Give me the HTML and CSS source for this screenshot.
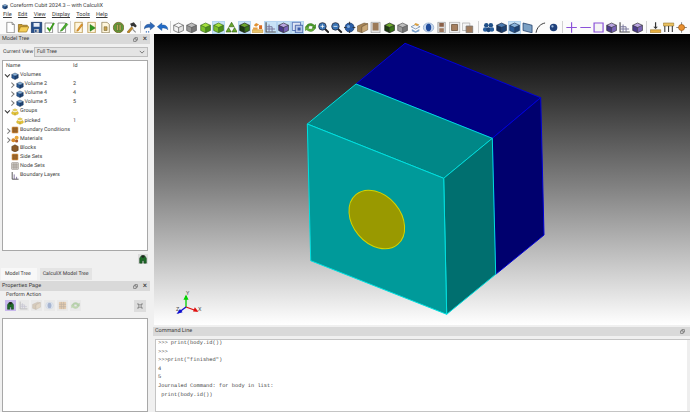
FILE: index.html
```html
<!DOCTYPE html>
<html lang="en">
<head>
<meta charset="utf-8">
<title>Coreform Cubit 2024.3 -- with CalculiX</title>
<link rel="stylesheet" href="styles.css">
</head>
<body>
<svg class="defs" aria-hidden="true">
  <symbol id="page" viewBox="0 0 16 16"><path d="M3 1h7l3 3v11H3z" fill="#fff" stroke="#777"/><path d="M10 1v3h3" fill="#ddd" stroke="#777"/></symbol>
  <symbol id="open" viewBox="0 0 16 16"><path d="M1 4h5l1 1h6v2H4L1 14z" fill="#c99a2c" stroke="#8a6a1e"/><path d="M4 7h11l-3 7H1z" fill="#f5cf5a" stroke="#a07c22"/></symbol>
  <symbol id="save" viewBox="0 0 16 16"><path d="M1 1h14v14H1z" fill="#27508c" stroke="#1b3766"/><path d="M4 2h8v5H4z" fill="#e8eef6"/><path d="M5 10h6v5H5z" fill="#c8c8c8"/><path d="M6 11h2v3H6z" fill="#27508c"/></symbol>
  <symbol id="check" viewBox="0 0 16 16"><path d="M2 2h10v13H2z" fill="#fff" stroke="#777"/><path d="M5 8l3 4 6-10" fill="none" stroke="#3c9a1c" stroke-width="2.4"/></symbol>
  <symbol id="pen" viewBox="0 0 16 16"><path d="M2 2h10v13H2z" fill="#fff" stroke="#777"/><path d="M6 11l7-9 2 2-7 8-3 1z" fill="#49b02c" stroke="#2c7a14" stroke-width=".7"/></symbol>
  <symbol id="journal" viewBox="0 0 16 16"><path d="M3 1h10v14H3z" fill="#fff6dc" stroke="#b08a3a"/><path d="M6 11l6-8 1.500 1.500-6 8-2 .5z" fill="#e69a28" stroke="#a8661a" stroke-width=".6"/></symbol>
  <symbol id="play" viewBox="0 0 16 16"><path d="M3 1h10v14H3z" fill="#fff6dc" stroke="#b08a3a"/><path d="M6 4l7 4.500-7 4.500z" fill="#2f9a1e" stroke="#1d6a10" stroke-width=".6"/></symbol>
  <symbol id="dots" viewBox="0 0 16 16"><path d="M3 1h7l3 3v11H3z" fill="#fff6dc" stroke="#8a7a50"/><path d="M6 7h4v5H6z" fill="#c9a34a" stroke="#6a5a30" stroke-width=".7"/></symbol>
  <symbol id="pause" viewBox="0 0 16 16"><circle cx="8" cy="8" r="7" fill="#5e9a3a" stroke="#7a5a1e"/><path d="M5.500 4h2v8h-2zM9 4h2v8H9z" fill="#d8c070" stroke="#4a3a10" stroke-width=".5"/></symbol>
  <symbol id="hammer" viewBox="0 0 16 16"><path d="M2 14l6-7 2 2-6 7z" fill="#c08a2a" stroke="#6a4a10" stroke-width=".6"/><path d="M6 3l5-2 4 5-2 2-3-2-2 1z" fill="#333"/><path d="M10 10l4 4-1 1-4-4z" fill="#888"/></symbol>
  <symbol id="redo" viewBox="0 0 16 16"><path d="M1 10c0-5 4-7 8-6V1l6 5-6 5V8c-3-1-6 0-8 2z" fill="#2a66b8" stroke="#174280" stroke-width=".6"/><path d="M3 13h1.500v1.500H3zM6 13h1.500v1.500H6z" fill="#2a66b8"/></symbol>
  <symbol id="undo" viewBox="0 0 16 16"><path d="M15 11c0-5-4-7-8-6V2L1 7l6 5V9c3-1 6 0 8 2z" fill="#1f6ac8" stroke="#154a90" stroke-width=".6"/></symbol>
  <symbol id="cube" viewBox="0 0 16 16"><path d="M1.500 5L8 2l6.500 3L8 8z" style="fill:var(--t)"/><path d="M1.500 5L8 8v7l-6.500-3z" style="fill:var(--l)"/><path d="M14.500 5L8 8v7l6.500-3z" style="fill:var(--r)"/><path d="M1.500 5L8 2l6.500 3v7L8 15l-6.500-3zM1.500 5L8 8l6.500-3M8 8v7" fill="none" style="stroke:var(--e)" stroke-width=".8"/></symbol>
  <symbol id="tri" viewBox="0 0 16 16"><path d="M8 1l3.500 6h-7zM4 8l3.500 6H.5zM12 8l3.500 6h-7z" fill="#69a82c" stroke="#2f5a10" stroke-width=".8"/></symbol>
  <symbol id="orange" viewBox="0 0 16 16"><path d="M6 2l4 2-4 3-3-2z" fill="#e09030"/><path d="M1 11h14v4H1z" fill="#e8c46a" stroke="#b07a20" stroke-width=".6"/><path d="M10 5h4v5h-4z" fill="#d86a20"/><path d="M2 8h6v3H2z" fill="#e8a040"/></symbol>
  <symbol id="grid" viewBox="0 0 16 16"><path d="M2 1v13h13" fill="none" stroke="#555" stroke-width="1.600"/><path d="M6 4v10M10 7v7M2 7h8M2 10h12" stroke="#77759a" stroke-width="1.300"/></symbol>
  <symbol id="refresh" viewBox="0 0 16 16"><path d="M2 7c1-4 7-6 11-2l2-1v5h-5l1.500-2C9 5 5 5 4 8z" fill="#4e9e2c" stroke="#2a6a14" stroke-width=".6"/><path d="M14 9c-1 4-7 6-11 2l-2 1V7h5l-1.500 2C7 11 11 11 12 8z" fill="#6ab43a" stroke="#2a6a14" stroke-width=".6"/></symbol>
  <symbol id="zoomin" viewBox="0 0 16 16"><path d="M10 10l5 5" stroke="#222" stroke-width="2.500"/><circle cx="6.500" cy="6.500" r="5" fill="#3a74b4" stroke="#223"/><path d="M4 6.500h5M6.500 4v5" stroke="#fff"/></symbol>
  <symbol id="zoomout" viewBox="0 0 16 16"><path d="M10 10l5 5" stroke="#222" stroke-width="2.500"/><circle cx="6.500" cy="6.500" r="5" fill="#3a74b4" stroke="#223"/><path d="M4 6.500h5" stroke="#fff"/></symbol>
  <symbol id="globe" viewBox="0 0 16 16"><circle cx="8" cy="8" r="6" fill="#2a5ea8" stroke="#16386e"/><path d="M8 0v4M8 12v4M0 8h4M12 8h4" stroke="#333" stroke-width="1.200"/><circle cx="6.500" cy="6.500" r="2" fill="#7aa8dc"/></symbol>
  <symbol id="box" viewBox="0 0 16 16"><path d="M1 6l9-4 5 1-8 4v8l-6-2z" fill="#a68558" stroke="#5a4020" stroke-width=".6"/><path d="M7 7l8-4v8l-8 4z" fill="#c9a878" stroke="#5a4020" stroke-width=".6"/></symbol>
  <symbol id="frame" viewBox="0 0 16 16"><path d="M2 1h12v14H2z" fill="#e4e4e4" stroke="#999"/><path d="M4 2h8v10H4z" fill="#9c7a58"/></symbol>
  <symbol id="layers" viewBox="0 0 16 16"><path d="M2 7l6-3 6 3-6 3z" fill="#f4f4f4" stroke="#6a8ab0"/><path d="M8 2l5 2-3 2-4-2z" fill="#dca040"/><path d="M3 10l5 3 5-3v3l-5 2-5-2z" fill="#7aa0cc"/></symbol>
  <symbol id="eye" viewBox="0 0 16 16"><ellipse cx="8" cy="8" rx="7" ry="6" fill="#c8d8ee" stroke="#8aa4c8"/><ellipse cx="8" cy="8" rx="3.500" ry="5" fill="#1e4a9a"/></symbol>
  <symbol id="door" viewBox="0 0 16 16"><path d="M3 1h10v14H3z" fill="#ddd" stroke="#999"/><path d="M5 2h6v5H5z" fill="#8a6048"/><path d="M5 9h6v5H5z" fill="#a07a60"/></symbol>
  <symbol id="brownbox" viewBox="0 0 16 16"><path d="M1 1h14v14H1z" fill="#eee" stroke="#aaa"/><path d="M4 4h8v8H4z" fill="#a68060" stroke="#6a5038"/></symbol>
  <symbol id="overlap" viewBox="0 0 16 16"><path d="M1 2h10v10H1z" fill="#f4f4f4" stroke="#aaa"/><path d="M6 6h9v9H6z" fill="#a07a5a" stroke="#777"/></symbol>
  <symbol id="overlapb" viewBox="0 0 16 16"><path d="M1 1h11v11H1z" fill="#dfe6f4" stroke="#3a5aa8"/><path d="M5 5h10v10H5z" fill="#b8c8e8" stroke="#2a4a98"/><path d="M8 8h4v4H8z" fill="#3a5aa8"/></symbol>
  <symbol id="cluster" viewBox="0 0 16 16"><circle cx="5" cy="5" r="3" fill="#1f4f88"/><circle cx="11" cy="5" r="3" fill="#1f4f88"/><circle cx="3.500" cy="10.500" r="3" fill="#2a5f9e"/><circle cx="8" cy="11" r="3.200" fill="#1b4478"/><circle cx="12.500" cy="10.500" r="3" fill="#2a5f9e"/></symbol>
  <symbol id="face" viewBox="0 0 16 16"><path d="M2 2l12 3v10L2 12z" fill="#7aa0c4" stroke="#1c3a66"/></symbol>
  <symbol id="curve" viewBox="0 0 16 16"><path d="M2 15C3 8 8 3 14 2" fill="none" stroke="#333" stroke-width="1.300"/></symbol>
  <symbol id="ball" viewBox="0 0 16 16"><circle cx="8" cy="8" r="5" fill="#1d3f7a"/><circle cx="6.500" cy="6.500" r="1.500" fill="#9ab8dc"/></symbol>
  <symbol id="plus" viewBox="0 0 16 16"><path d="M8 1v14M1 8h14" stroke="#8a50d8" stroke-width="1.600"/></symbol>
  <symbol id="minus" viewBox="0 0 16 16"><path d="M1 8h14" stroke="#8a50d8" stroke-width="1.600"/></symbol>
  <symbol id="square" viewBox="0 0 16 16"><path d="M2 2h12v12H2z" fill="#f4f4f4" stroke="#8a50d8" stroke-width="1.600"/></symbol>
  <symbol id="anvil" viewBox="0 0 16 16"><path d="M8 1v8" stroke="#333" stroke-width="1.600"/><path d="M1 11h14v4H1z" fill="#e8b040" stroke="#8a6a20" stroke-width=".7"/><path d="M5 7l3 3 3-3z" fill="#333"/></symbol>
  <symbol id="bracket" viewBox="0 0 16 16"><path d="M1 2h14v4H1z" fill="#e8c060" stroke="#8a6a20" stroke-width=".7"/><path d="M3 6v8M8 6v8M13 6v8" stroke="#333" stroke-width="1.400"/></symbol>
  <symbol id="gear" viewBox="0 0 16 16"><path d="M8 1v14M1 8h14" stroke="#777" stroke-width="1.200"/><circle cx="8" cy="8" r="4" fill="#e89030" stroke="#a05a10"/></symbol>
  <symbol id="float" viewBox="0 0 8 8"><path d="M3 1h4v4H3z" fill="#e8e8e8" stroke="#333" stroke-width=".8"/><path d="M1 3h4v4H1z" fill="#e8e8e8" stroke="#333" stroke-width=".8"/></symbol>
  <symbol id="group" viewBox="0 0 10 10"><path d="M5 1l3 1.500-3 1.500-3-1.500z" fill="#f4dc60" stroke="#b89a20" stroke-width=".5"/><path d="M2 4.500l3 1.500v3L1 7.500V5zM8 4.500L5 6v3l4-1.500V5z" fill="#e8c83a" stroke="#b89a20" stroke-width=".5"/></symbol>
  <symbol id="bc" viewBox="0 0 10 10"><path d="M1 1h8v8H1z" fill="#d08a3a"/><path d="M3.700 1v8M6.300 1v8M1 3.700h8M1 6.300h8" stroke="#5a3a18" stroke-width=".7"/></symbol>
  <symbol id="mat" viewBox="0 0 10 10"><circle cx="3" cy="6.500" r="2.500" fill="#d88a2a"/><circle cx="7" cy="3.500" r="2.500" fill="#e8a83a"/><circle cx="7" cy="7.500" r="2" fill="#a85a2a"/></symbol>
  <symbol id="block" viewBox="0 0 10 10"><path d="M1 3l4-2 4 2v5l-4 2-4-2z" fill="#8a5a28" stroke="#4a2e10" stroke-width=".6"/></symbol>
  <symbol id="nodes" viewBox="0 0 10 10"><path d="M1 1h8v8H1zM3.700 1v8M6.300 1v8M1 3.700h8M1 6.300h8" fill="none" stroke="#4a3a2a" stroke-width=".6"/></symbol>
  <symbol id="layersb" viewBox="0 0 10 10"><path d="M1.500 0v9h8" fill="none" stroke="#333" stroke-width="1"/><path d="M4 3v6M7 6v3" stroke="#6a5a8a" stroke-width="1"/></symbol>
  <symbol id="person" viewBox="0 0 12 12"><path d="M2 11V5l2-3h4l2 3v6H7V8H5v3z" fill="#1e6a28" stroke="#0c3a12" stroke-width=".6"/><circle cx="6" cy="3" r="1.600" fill="#222"/></symbol>
  <symbol id="pin" viewBox="0 0 12 12"><path d="M3 9l6-6M3 3l6 6" stroke="#888" stroke-width="1.400"/><circle cx="6" cy="6" r="2" fill="#bbb" stroke="#888" stroke-width=".5"/></symbol>
</svg>

<header class="titlebar">
  <svg class="app-icon" viewBox="0 0 16 16"><use href="#cube" class="c-blue"/></svg>
  <span>Coreform Cubit 2024.3 -- with CalculiX</span>
</header>
<nav class="menubar">
  <span>File</span><span>Edit</span><span>View</span><span>Display</span><span>Tools</span><span>Help</span>
</nav>
<div class="toolbar">
  <svg class="ti"><use href="#page"/></svg>
  <svg class="ti"><use href="#open"/></svg>
  <svg class="ti"><use href="#save"/></svg>
  <svg class="ti"><use href="#check"/></svg>
  <svg class="ti"><use href="#pen"/></svg>
  <i class="sep"></i>
  <svg class="ti"><use href="#journal"/></svg>
  <svg class="ti"><use href="#play"/></svg>
  <svg class="ti"><use href="#dots"/></svg>
  <svg class="ti"><use href="#pause"/></svg>
  <svg class="ti"><use href="#hammer"/></svg>
  <i class="sep wide"></i>
  <svg class="ti"><use href="#redo"/></svg>
  <svg class="ti"><use href="#undo"/></svg>
  <i class="sep"></i>
  <svg class="ti"><use href="#cube" class="c-wire"/></svg>
  <svg class="ti"><use href="#cube" class="c-gray"/></svg>
  <svg class="ti"><use href="#cube" class="c-green"/></svg>
  <svg class="ti on"><use href="#cube" class="c-green"/></svg>
  <svg class="ti"><use href="#tri"/></svg>
  <svg class="ti on"><use href="#cube" class="c-dark"/></svg>
  <svg class="ti"><use href="#orange"/></svg>
  <svg class="ti on"><use href="#grid"/></svg>
  <svg class="ti on"><use href="#cube" class="c-purple"/></svg>
  <svg class="ti on"><use href="#overlapb"/></svg>
  <svg class="ti"><use href="#refresh"/></svg>
  <svg class="ti"><use href="#zoomin"/></svg>
  <svg class="ti"><use href="#zoomout"/></svg>
  <svg class="ti"><use href="#globe"/></svg>
  <svg class="ti"><use href="#box"/></svg>
  <svg class="ti"><use href="#frame"/></svg>
  <svg class="ti"><use href="#cube" class="c-dark"/></svg>
  <svg class="ti"><use href="#cube" class="c-gray"/></svg>
  <svg class="ti"><use href="#layers"/></svg>
  <svg class="ti"><use href="#eye"/></svg>
  <svg class="ti"><use href="#door"/></svg>
  <svg class="ti"><use href="#brownbox"/></svg>
  <svg class="ti"><use href="#overlap"/></svg>
  <i class="sep wider"></i>
  <svg class="ti"><use href="#cluster"/></svg>
  <svg class="ti"><use href="#cube" class="c-navy"/></svg>
  <svg class="ti on"><use href="#cube" class="c-blue"/></svg>
  <svg class="ti"><use href="#face"/></svg>
  <svg class="ti"><use href="#curve"/></svg>
  <svg class="ti"><use href="#ball"/></svg>
  <i class="sep wide"></i>
  <svg class="ti"><use href="#plus"/></svg>
  <svg class="ti"><use href="#minus"/></svg>
  <svg class="ti"><use href="#square"/></svg>
  <svg class="ti"><use href="#cube" class="c-purple"/></svg>
  <svg class="ti"><use href="#grid"/></svg>
  <svg class="ti"><use href="#cube" class="c-purple"/></svg>
  <i class="sep wide"></i>
  <svg class="ti"><use href="#anvil"/></svg>
  <svg class="ti"><use href="#bracket"/></svg>
  <svg class="ti"><use href="#gear"/></svg>
  <svg class="ti"><use href="#orange"/></svg>
</div>

<main class="workspace">
  <aside class="left-dock">
    <div class="dock-head">
      <span>Model Tree</span>
      <svg class="dock-btn"><use href="#float"/></svg>
      <span class="dock-close">×</span>
    </div>
    <div class="view-row">
      <span class="view-label">Current View</span>
      <div class="select"><span>Full Tree</span><svg class="chev" viewBox="0 0 8 8"><path d="M1 2.500l3 3 3-3" fill="none" stroke="#555"/></svg></div>
    </div>
    <div class="tree">
      <div class="row head"><span class="name">Name</span><span class="id">Id</span></div>
      <div class="row"><span class="tw open"></span><svg class="ri"><use href="#cube" class="c-blue"/></svg><span class="name">Volumes</span></div>
      <div class="row l2"><span class="tw"></span><svg class="ri"><use href="#cube" class="c-blue"/></svg><span class="name">Volume 2</span><span class="id">2</span></div>
      <div class="row l2"><span class="tw"></span><svg class="ri"><use href="#cube" class="c-blue"/></svg><span class="name">Volume 4</span><span class="id">4</span></div>
      <div class="row l2"><span class="tw"></span><svg class="ri"><use href="#cube" class="c-blue"/></svg><span class="name">Volume 5</span><span class="id">5</span></div>
      <div class="row"><span class="tw open"></span><svg class="ri"><use href="#group"/></svg><span class="name">Groups</span></div>
      <div class="row l2"><span class="tw none"></span><svg class="ri"><use href="#group"/></svg><span class="name">picked</span><span class="id">1</span></div>
      <div class="row"><span class="tw"></span><svg class="ri"><use href="#bc"/></svg><span class="name">Boundary Conditions</span></div>
      <div class="row"><span class="tw"></span><svg class="ri"><use href="#mat"/></svg><span class="name">Materials</span></div>
      <div class="row"><span class="tw none"></span><svg class="ri"><use href="#block"/></svg><span class="name">Blocks</span></div>
      <div class="row"><span class="tw none"></span><svg class="ri"><use href="#bc"/></svg><span class="name">Side Sets</span></div>
      <div class="row"><span class="tw none"></span><svg class="ri"><use href="#nodes"/></svg><span class="name">Node Sets</span></div>
      <div class="row"><span class="tw none"></span><svg class="ri"><use href="#layersb"/></svg><span class="name">Boundary Layers</span></div>
    </div>
    <div class="tree-foot"><svg class="foot-btn"><use href="#person"/></svg></div>
    <div class="tabs"><span class="tab active">Model Tree</span><span class="tab">CalculiX Model Tree</span></div>
    <div class="dock-head props">
      <span>Properties Page</span>
      <svg class="dock-btn"><use href="#float"/></svg>
      <span class="dock-close">×</span>
    </div>
    <div class="action-label">Perform Action</div>
    <div class="actions">
      <svg class="ai on"><use href="#person"/></svg>
      <svg class="ai dim"><use href="#grid"/></svg>
      <svg class="ai dim"><use href="#box"/></svg>
      <svg class="ai dim"><use href="#eye"/></svg>
      <svg class="ai dim"><use href="#bc"/></svg>
      <svg class="ai dim"><use href="#refresh"/></svg>
      <svg class="ai pin"><use href="#pin"/></svg>
    </div>
    <div class="props-body"></div>
  </aside>

  <section class="center">
    <div class="viewport">
      <svg class="scene" viewBox="154 34 536 291">
        <g stroke-width="1" stroke-linejoin="round">
          <path d="M356 84L405 43.300 540.700 97.700 492.300 138.300z" fill="#000080" stroke="#0000d8"/>
          <path d="M492.300 138.300L540.700 97.700 544 235 495.700 274.300z" fill="#00006e" stroke="#0000d8"/>
          <path d="M307.300 124L356 84 492.300 138.300 443.700 178.300z" fill="#008787" stroke="#00dcdc"/>
          <path d="M443.700 178.300L492.300 138.300 495.700 274.300 446.700 314.300z" fill="#006f6f" stroke="#00dcdc"/>
          <path d="M307.300 124L443.700 178.300 446.700 314.300 310.700 260.700z" fill="#009a9a" stroke="#00e0e0"/>
          <ellipse cx="376.800" cy="219.500" rx="32.500" ry="24" transform="rotate(50 376.800 219.500)" fill="#999900" stroke="#d4d400"/>
        </g>
        <g class="axes" stroke-width="1.300">
          <path d="M186 307V296" stroke="#00d000"/>
          <path d="M186 307L197 311" stroke="#e01010"/>
          <path d="M186 307L178 313" stroke="#1010d0"/>
          <path d="M186 296l-1.500 3h3z" fill="#00d000" stroke="#00d000"/>
          <path d="M197 311l-3-.2 1-2.300z" fill="#e01010" stroke="#e01010"/>
          <path d="M178 313l2-3 1.500 2z" fill="#1010d0" stroke="#1010d0"/>
          <text x="186" y="295">Y</text>
          <text x="198" y="311">X</text>
          <text x="176" y="311">Z</text>
        </g>
      </svg>
    </div>
    <div class="dock-head cmd-head">
      <span>Command Line</span>
      <svg class="dock-btn"><use href="#float"/></svg>
    </div>
    <div class="console">
      <pre class="console-text">&gt;&gt;&gt; print(body.id())
&gt;&gt;&gt;
&gt;&gt;&gt;print("finished")
4
5
Journaled Command: for body in list:
 print(body.id())</pre>
      <div class="scroll"></div>
    </div>
  </section>
</main>
</body>
</html>
```
FILE: styles.css
```css
* { box-sizing: border-box; }
html, body { margin: 0; height: 412px; overflow: hidden; }
body {
  width: 690px;
  background: #f0f0f0;
  color: #3a3a3a;
  font: 5.500px/9px Roboto, "Open Sans", sans-serif;
  text-rendering: geometricPrecision;
  display: flex;
  flex-direction: column;
}
.defs { width: 0; height: 0; position: absolute; }

.c-wire { --t: #f8f8f8; --l: #f2f2f2; --r: #e4e4e4; --e: #444; }
.c-gray { --t: #bbb; --l: #999; --r: #777; --e: #444; }
.c-green { --t: #a4e03c; --l: #7cc02a; --r: #4c9018; --e: #2a5a10; }
.c-dark { --t: #6aa62a; --l: #1c3a10; --r: #3a7418; --e: #111; }
.c-purple { --t: #b8a4e0; --l: #4a3a8a; --r: #7a64b8; --e: #222; }
.c-blue { --t: #8ab4dc; --l: #2a5a96; --r: #1e4374; --e: #12284a; }
.c-navy { --t: #4a7ab0; --l: #14315c; --r: #1e4374; --e: #0c1c38; }

.titlebar {
  height: 11px;
  background: #fff;
  display: flex;
  align-items: center;
  gap: 2px;
  padding: 1px 0 0 2px;
  font-size: 5.500px;
}
.app-icon { width: 6px; height: 7px; }

.menubar {
  height: 9px;
  background: #fff;
  display: flex;
  padding-left: 3px;
  gap: 6.200px;
  font-size: 5.600px;
  line-height: 9px;
}
.menubar span { text-decoration: underline; text-decoration-thickness: 0.3px; text-underline-offset: 1px; }

.toolbar {
  height: 14px;
  background: #fbfbfb;
  display: flex;
  align-items: center;
  padding-left: 3.600px;
  overflow: hidden;
}
.ti { flex: none; width: 13.150px; height: 13px; padding: 0.500px; }
.ti.on { background: #c8e2f6; box-shadow: inset 0 0 0 1px #b4d4f0; }
.sep { flex: none; width: 3px; height: 12px; }
.sep::after { content: ""; display: block; width: 1px; height: 12px; margin: 0 auto; background: #d0d0d0; }
.sep.wide { width: 5px; }
.sep.wider { width: 7px; }

.workspace { flex: 1; min-height: 0; display: flex; }

.left-dock {
  width: 150px;
  flex: none;
  display: flex;
  flex-direction: column;
  padding: 0 2px;
}
.dock-head {
  height: 10px;
  flex: none;
  margin: 0 -2px;
  padding: 0 2px;
  background: #d9d9d9;
  display: flex;
  align-items: center;
  font-size: 5.500px;
}
.dock-head > span:first-child { flex: 1; }
.dock-btn { width: 5px; height: 5px; margin-right: 4px; }
.dock-close { width: 6px; font-size: 8px; line-height: 8px; color: #333; text-align: center; }

.view-row {
  height: 16px;
  flex: none;
  display: flex;
  align-items: center;
  font-size: 5.300px;
  padding-left: 1px;
}
.view-label { width: 31px; flex: none; }
.select {
  flex: 1;
  height: 10px;
  background: #e4e4e4;
  border: 1px solid #bdbdbd;
  display: flex;
  align-items: center;
  justify-content: space-between;
  padding: 0 2px;
  font-size: 5.300px;
}
.chev { width: 6px; height: 6px; }

.tree {
  height: 191px;
  flex: none;
  background: #fff;
  border: 1px solid #a8a8a8;
  padding: 0 0 0 2px;
}
.row { height: 9.100px; display: flex; align-items: center; font-size: 5.400px; position: relative; }
.row.head { height: 10px; padding-left: 1px; }
.row.l2 { padding-left: 4.500px; }
.row .name { white-space: nowrap; }
.row .id { position: absolute; left: 68px; }
.tw { width: 6px; height: 6px; flex: none; position: relative; }
.tw::before {
  content: "";
  position: absolute;
  left: 0.500px;
  top: 1.500px;
  width: 2.500px;
  height: 2.500px;
  border-right: 0.5px solid #777;
  border-top: 0.5px solid #777;
  transform: rotate(45deg);
}
.tw.open::before { transform: rotate(135deg); border-color: #333; left: 1px; top: 0.500px; }
.tw.none::before { display: none; }
.ri { width: 8px; height: 8px; flex: none; margin-right: 1px; }

.tree-foot { height: 16px; flex: none; display: flex; align-items: center; justify-content: flex-end; }
.foot-btn { width: 10px; height: 10px; background: #dcdcdc; }

.tabs { height: 13px; flex: none; display: flex; font-size: 5.200px; margin: 0 -2px; padding-left: 1px; align-items: flex-end; }
.tab { height: 12px; line-height: 12px; padding: 0 3px; background: #e4e4e4; margin-left: 3px; }
.tab.active { background: #f8f8f8; margin-left: 0; padding: 0 6px 0 4px; }

.dock-head.props { margin-top: 1px; }

.action-label { height: 9px; flex: none; font-size: 5.200px; padding-left: 4px; line-height: 8px; }
.actions { height: 18px; flex: none; display: flex; align-items: flex-start; padding-left: 3px; gap: 2px; }
.ai { width: 11px; height: 11px; flex: none; padding: 1px; }
.ai.on { background: #c8b8ec; }
.ai.dim { opacity: .35; background: #ddd; }
.ai.pin { margin-left: auto; margin-right: 2px; background: #ddd; width: 12px; height: 12px; }
.props-body { flex: 1; background: #fff; border: 1px solid #a8a8a8; }

.center { flex: 1; min-width: 0; display: flex; flex-direction: column; padding-left: 4px; }
.viewport {
  height: 291px;
  flex: none;
  background: linear-gradient(#000 0%, #808080 52%, #fff 100%);
}
.scene { display: block; width: 536px; height: 291px; }
.axes text { font: 5.500px Roboto, sans-serif; fill: #555; stroke: none; }
.dock-head.cmd-head {
  margin: 2px 0 3px -1px;
  height: 9px;
  padding: 0 2px;
  justify-content: space-between;
}
.cmd-head .dock-btn { margin-right: 3px; }
.console { flex: 1; min-height: 0; background: #fff; border: 1px solid #c4c4c4; border-right: 0; display: flex; margin-left: 1px; }
.console-text {
  flex: 1;
  margin: -1px 0 0;
  padding: 0 0 0 2px;
  font: 5.350px/8.600px "Liberation Mono", monospace;
  color: #444;
}
.scroll { width: 3px; background: #eee; }
```
